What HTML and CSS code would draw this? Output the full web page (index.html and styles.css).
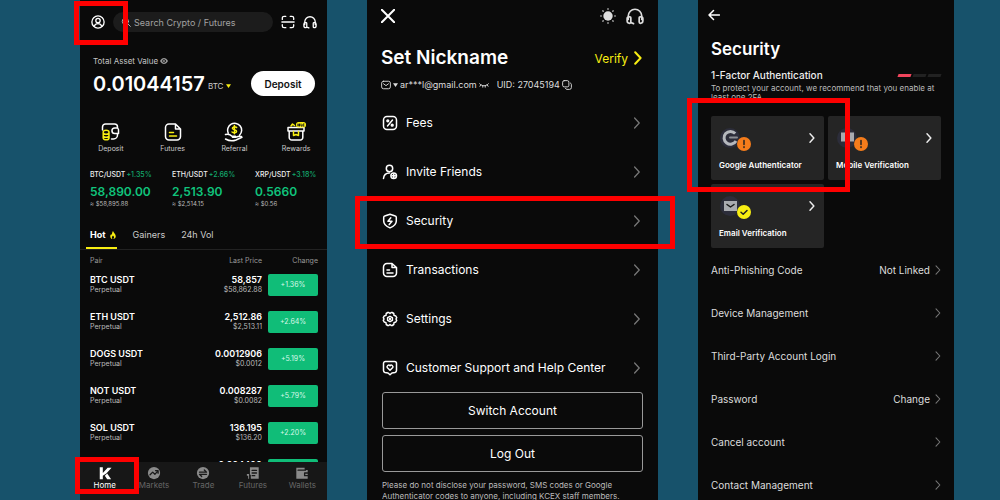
FILE: index.html
```html
<!DOCTYPE html>
<html lang="en">
<head>
<meta charset="utf-8">
<meta name="viewport" content="width=device-width, initial-scale=1">
<title>Security setup guide</title>
<link rel="stylesheet" href="styles.css">
</head>
<body>
<svg class="defs" width="0" height="0" aria-hidden="true">
  <symbol id="chev" viewBox="0 0 8 14"><path d="M1.2 1.2 6.6 7l-5.4 5.8"/></symbol>
  <symbol id="headset" viewBox="0 0 16 16"><path d="M2 11V8a6 6 0 0 1 12 0v3M1 10.5c0-1 .7-1.7 1.6-1.7h.9c.5 0 .8.3.8.8v3.8c0 .6-.5 1.1-1.1 1.1A2.2 2.2 0 0 1 1 12.300zM15 10.500c0-1-.7-1.700-1.600-1.700h-.9c-.5 0-.8.3-.8.8v3.800c0 .6.5 1.100 1.100 1.100a2.200 2.200 0 0 0 2.200-2.200zM4.300 13.800l2.400 1"/></symbol>
  <symbol id="doc" viewBox="0 0 16 16"><path d="M10 1.500H5A3.500 3.500 0 0 0 1.500 5v6A3.500 3.500 0 0 0 5 14.500h6a3.500 3.500 0 0 0 3.500-3.500V5.500zM10 1.500V5.500h4.500"/></symbol>
</svg>

<main class="stage">
  <section class="screen home" aria-label="Home">
    <header class="home-top">
      <button class="icon-btn marked marked-user" aria-label="Profile">
        <svg class="i14" viewBox="0 0 16 16"><circle cx="8" cy="8" r="7"/><circle cx="8" cy="6.300" r="2.500"/><path d="M3.600 12.800c.8-1.900 2.400-3 4.400-3s3.600 1.100 4.400 3"/></svg>
      </button>
      <label class="search">
        <svg class="i10" viewBox="0 0 16 16"><circle cx="7" cy="7" r="5"/><path d="m11 11 4 4"/></svg>
        <input type="text" placeholder="Search Crypto / Futures" aria-label="Search">
      </label>
      <button class="icon-btn" aria-label="Scan">
        <svg class="i14" viewBox="0 0 16 16"><path d="M1.500 5V3.500a2 2 0 0 1 2-2H5.500M10.500 1.500h2a2 2 0 0 1 2 2V5M1.500 11v1.500a2 2 0 0 0 2 2h2M10.500 14.500h2a2 2 0 0 0 2-2V11M1 8h14"/></svg>
      </button>
      <button class="icon-btn" aria-label="Support"><svg class="i14"><use href="#headset"/></svg></button>
    </header>

    <div class="asset">
      <div class="asset-label">Total Asset Value
        <svg class="i8 eye" viewBox="0 0 16 16"><path class="fill" d="M0 8c2-4 5-6 8-6s6 2 8 6c-2 4-5 6-8 6S2 12 0 8z"/><circle class="ring" cx="8" cy="8" r="3"/></svg>
      </div>
      <div class="asset-row">
        <strong class="amount">0.01044157</strong>
        <span class="unit">BTC</span>
        <svg class="caret yellow" viewBox="0 0 8 6"><path d="M0 0h8L4 6z"/></svg>
        <button class="deposit">Deposit</button>
      </div>
    </div>

    <nav class="quick" aria-label="Shortcuts">
      <a href="#">
        <svg class="i20" viewBox="0 0 20 20"><path d="M1.500 8V5a3 3 0 0 1 3-3h9a3 3 0 0 1 3 3v1M16.500 6h-2.800a2.700 2.700 0 0 0 0 5.500h3.800V8.500a2.500 2.500 0 0 0-1-2.500M16.500 11.500V13a4 4 0 0 1-4 4h-2"/><path class="ystroke" d="M2.200 10a2.900 1.800 0 0 1 5.800 0v6a2.900 1.800 0 0 1-5.800 0zM2.200 11c1 1.700 4.800 1.700 5.800 0M2.200 14c1 1.700 4.800 1.700 5.800 0"/></svg>
        Deposit
      </a>
      <a href="#">
        <svg class="i20" viewBox="0 0 20 20"><path d="M12.500 2H6a3.500 3.500 0 0 0-3.500 3.500v9A3.500 3.500 0 0 0 6 18h8a3.500 3.500 0 0 0 3.500-3.500V7zM12.500 2v5h5"/><path class="ystroke" d="M6.500 10.500h4M6.500 14h7"/></svg>
        Futures
      </a>
      <a href="#">
        <svg class="i20" viewBox="0 0 20 20"><path d="M4.200 11A7 7 0 1 1 15.500 13.300M1.500 12.500c3-1 5 .2 6.500 1.700h3.500M1.500 17c3.500 2 7.500 2.200 10.500 1l6-2.800c-.7-1.500-2.500-1.200-6.500 0H8.500"/><path class="ystroke" d="M12.600 5.500c-2-1.300-4.400-.5-4.200 1 .2 1.600 4.200 1 4.200 2.800 0 1.600-2.800 2-4.600.7M10.400 3.500v8.200"/></svg>
        Referral
      </a>
      <a href="#">
        <svg class="i20" viewBox="0 0 20 20"><path d="M2 5.500h16v3.500H2zM3.200 9v6.500A2.500 2.500 0 0 0 5.700 18h8.600a2.500 2.500 0 0 0 2.500-2.500V9"/><path class="ystroke" d="M7.500 9.500v4l2.500-1 2.500 1v-4M5 4l1.500-2L8.500 3.500"/><rect class="yfill" x="10" y="0" width="10" height="5.500" rx="2.500"/><path class="dark" d="M12 2v2M13.500 2v2M12 3h1.500M15 2v2h1M18 2h-1v2h1"/></svg>
        Rewards
      </a>
    </nav>

    <div class="tickers">
      <div><p class="t-name">BTC/USDT<span>+1.35%</span></p><p class="t-price">58,890.00</p><p class="t-sub">≈ $58,895.88</p></div>
      <div><p class="t-name">ETH/USDT<span>+2.66%</span></p><p class="t-price">2,513.90</p><p class="t-sub">≈ $2,514.15</p></div>
      <div><p class="t-name">XRP/USDT<span>+3.18%</span></p><p class="t-price">0.5660</p><p class="t-sub">≈ $0.56</p></div>
    </div>

    <div class="tabs" role="tablist">
      <button class="tab active" role="tab" aria-selected="true">Hot
        <svg class="i8" viewBox="0 0 16 16"><path class="yfill" d="M8 0c1 4 5.500 5.500 5.500 10.500C13.500 14 11 16 8 16s-5.500-2-5.500-5.200c0-2.300 1-3.800 2-4.800.2 1 .5 1.600 1.200 2C6 5 6.500 2 8 0z"/><path class="cut" d="M8 9c1.500 1.500 2.200 2.500 2.200 4S9 16 8 16s-2.200-1-2.200-3S7 10.500 8 9z"/></svg>
      </button>
      <button class="tab" role="tab" aria-selected="false">Gainers</button>
      <button class="tab" role="tab" aria-selected="false">24h Vol</button>
    </div>

    <div class="market">
      <table>
        <thead><tr><th>Pair</th><th class="num">Last Price</th><th class="num chg">Change</th></tr></thead>
        <tbody>
          <tr><td><b>BTC USDT</b><small>Perpetual</small></td><td class="num"><b>58,857</b><small>$58,862.88</small></td><td class="chg"><span class="badge">+1.36%</span></td></tr>
          <tr><td><b>ETH USDT</b><small>Perpetual</small></td><td class="num"><b>2,512.86</b><small>$2,513.11</small></td><td class="chg"><span class="badge">+2.64%</span></td></tr>
          <tr><td><b>DOGS USDT</b><small>Perpetual</small></td><td class="num"><b>0.0012906</b><small>$0.0012</small></td><td class="chg"><span class="badge">+5.19%</span></td></tr>
          <tr><td><b>NOT USDT</b><small>Perpetual</small></td><td class="num"><b>0.008287</b><small>$0.0082</small></td><td class="chg"><span class="badge">+5.79%</span></td></tr>
          <tr><td><b>SOL USDT</b><small>Perpetual</small></td><td class="num"><b>136.195</b><small>$136.20</small></td><td class="chg"><span class="badge">+2.20%</span></td></tr>
          <tr><td></td><td class="num"><b>0.004490</b><small>&nbsp;</small></td><td class="chg"><span class="badge">&nbsp;</span></td></tr>
        </tbody>
      </table>
    </div>

    <nav class="tabbar" aria-label="Main">
      <a href="#" class="on marked marked-home">
        <svg class="i14" viewBox="0 0 16 16"><path class="fill" d="M2 1.500h3.500v6.500L11 2h4.500L9.500 8.500 5.500 11V15H2zM10.500 8.500l4.500 6.500h-4.500L7.800 11z"/></svg>Home</a>
      <a href="#">
        <svg class="i14" viewBox="0 0 16 16"><circle class="fill" cx="8" cy="8" r="7"/><path class="dark" d="m3.500 10 3-3 2.500 2.500 3.500-4M9.800 5.300h2.900v2.900"/></svg>Markets</a>
      <a href="#">
        <svg class="i14" viewBox="0 0 16 16"><circle class="fill" cx="8" cy="8" r="7"/><path class="dark" d="M4 7h8L9.500 4.500M12 9.500H4L6.500 12"/></svg>Trade</a>
      <a href="#">
        <svg class="i14" viewBox="0 0 16 16"><path class="fill" d="M4.500 1.500h10v13h-9V10H4.500zM1 9h2.500v5.500H2.500V11H1z"/><path class="dark" d="M7 5h5M7 8h5M7 11h3"/></svg>Futures</a>
      <a href="#">
        <svg class="i14" viewBox="0 0 16 16"><path class="fill" d="M1.500 2H11v2.500h3.500v10h-13z"/><path class="dark" d="M3.500 4.800H12M15 8h-4v3h4"/></svg>Wallets</a>
    </nav>
  </section>

  <section class="screen profile" aria-label="Profile">
    <header class="profile-top">
      <button class="icon-btn" aria-label="Close"><svg class="i14 close" viewBox="0 0 14 14"><path d="m.8.8 12.400 12.400M13.200.8.8 13.200"/></svg></button>
      <span class="grow"></span>
      <button class="icon-btn" aria-label="Theme"><svg class="i16" viewBox="0 0 16 16"><circle class="sun" cx="8" cy="8" r="4.700"/><path class="rays" d="M8 .8v.4M8 14.800v.4M.8 8h.4M14.800 8h.4M2.900 2.900l.3.3M12.800 12.800l.3.3M2.900 13.100l.3-.3M12.800 3.200l.3-.3"/></svg></button>
      <button class="icon-btn dim" aria-label="Support"><svg class="i18"><use href="#headset"/></svg></button>
    </header>
    <div class="nick">
      <h1>Set Nickname</h1>
      <a href="#" class="verify">Verify <svg class="chev big"><use href="#chev"/></svg></a>
    </div>
    <div class="ids">
      <svg class="i10" viewBox="0 0 16 14"><rect x="1" y="1" width="14" height="12" rx="3"/><path d="m4 5 4 3 4-3"/></svg>
      <svg class="caret" viewBox="0 0 8 6"><path d="M0 0h8L4 6z"/></svg>
      <span>ar***l@gmail.com</span>
      <svg class="i10" viewBox="0 0 16 14"><path d="M1 5c4 4.500 10 4.500 14 0M3 6.500 1.500 9M13 6.500 14.500 9M6 8v2.500M10 8v2.500"/></svg>
      <span class="uid">UID: 27045194</span>
      <svg class="i10" viewBox="0 0 16 16"><rect x="1" y="1" width="10" height="10" rx="2.500"/><path d="M13.500 5c1 .3 1.500 1 1.500 2v5a3 3 0 0 1-3 3H8a3 3 0 0 1-2.500-1.500"/></svg>
    </div>
    <nav class="menu" aria-label="Account">
      <a href="#"><svg class="i16" viewBox="0 0 16 16"><rect x="1.500" y="1.500" width="13" height="13" rx="3.500"/><path d="m10.500 5-5 6"/><circle cx="5.800" cy="5.800" r=".9"/><circle cx="10.200" cy="10.200" r=".9"/></svg><span>Fees</span><svg class="chev"><use href="#chev"/></svg></a>
      <a href="#"><svg class="i16" viewBox="0 0 16 16"><circle cx="7.500" cy="4.500" r="3.200"/><path d="M1.500 14.500c.3-3.500 2.500-5.500 6-5.500"/><circle cx="11.700" cy="11.700" r="2.800"/><path d="M11.700 10v3.400M10 11.700h3.400"/></svg><span>Invite Friends</span><svg class="chev"><use href="#chev"/></svg></a>
      <a href="#" class="marked marked-security"><svg class="i16" viewBox="0 0 16 16"><path d="M8 1.300 13.300 3c.7.2 1 .7 1 1.400V8c0 3-2.300 5.300-6.300 6.900C4 13.300 1.700 11 1.700 8V4.400c0-.7.3-1.200 1-1.400z"/><path d="M8.800 4.800 6 8.300h4l-2.800 3.300"/></svg><span>Security</span><svg class="chev"><use href="#chev"/></svg></a>
      <a href="#"><svg class="i16" viewBox="0 0 16 16"><use href="#doc" width="16" height="16"/><path d="M5 8h2.500M5 11h6"/></svg><span>Transactions</span><svg class="chev"><use href="#chev"/></svg></a>
      <a href="#"><svg class="i16" viewBox="0 0 16 16"><path d="M5.800 1.500h1l1.200 1 1.200-1h1l1.600 1 .2 1.900 1.800.6.900 1.600-.7 1.400.7 1.400-.9 1.600-1.800.6-.2 1.900-1.600 1h-1L8 13.500l-1.200 1h-1l-1.600-1-.2-1.900-1.800-.6-.9-1.600.7-1.400-.7-1.400.9-1.600L4 4.400l.2-1.900z"/><path d="m8 5.300 2.400 1.400v2.600L8 10.700 5.600 9.300V6.700z"/><circle cx="8" cy="8" r=".5"/></svg><span>Settings</span><svg class="chev"><use href="#chev"/></svg></a>
      <a href="#"><svg class="i16" viewBox="0 0 16 16"><path d="M3.500 1.500h9a2 2 0 0 1 2 2v7c0 1-.6 1.700-1.500 2L10 13l-2 1.800L6 13l-3-.5c-.9-.3-1.500-1-1.500-2v-7a2 2 0 0 1 2-2z"/><path d="M8 10.300 5.200 7.500C4.500 6.200 6.500 4 8 5.800c1.500-1.800 3.500.4 2.800 1.700z"/></svg><span>Customer Support and Help Center</span><svg class="chev"><use href="#chev"/></svg></a>
    </nav>
    <div class="actions">
      <button>Switch Account</button>
      <button>Log Out</button>
    </div>
    <p class="notice">Please do not disclose your password, SMS codes or Google Authenticator codes to anyone, including KCEX staff members.</p>
  </section>

  <section class="screen security" aria-label="Security">
    <button class="icon-btn back" aria-label="Back"><svg class="i12" viewBox="0 0 12 12"><path d="M11.500 6H1M5.500 1.500 1 6l4.500 4.500"/></svg></button>
    <h2>Security</h2>
    <div class="factor">
      <h3>1-Factor Authentication</h3>
      <span class="level"><i class="hit"></i><i></i><i></i></span>
    </div>
    <p class="hint">To protect your account, we recommend that you enable at least one 2FA.</p>
    <div class="cards">
      <a href="#" class="card marked marked-google">
        <span class="card-top">
          <span class="method"><svg class="i20" viewBox="0 0 20 20"><circle class="halo" cx="10" cy="10" r="10"/><path class="gring" d="M15.200 5.500A6.400 6.400 0 1 0 16 13"/><path class="gbar" d="M10 9.500h7"/></svg>
          <svg class="state" viewBox="0 0 14 14"><circle class="warn" cx="7" cy="7" r="7"/><path class="sign" d="M7 3.500v4M7 9.800v.7"/></svg></span>
          <svg class="chev light"><use href="#chev"/></svg>
        </span>
        Google Authenticator
      </a>
      <a href="#" class="card">
        <span class="card-top">
          <span class="method"><svg class="i20" viewBox="0 0 20 20"><circle class="halo" cx="10" cy="10" r="10"/><path class="gray" d="M4 4.500h13v9h-4.500L10.500 16l-2-2.500H4z"/></svg>
          <svg class="state" viewBox="0 0 14 14"><circle class="warn" cx="7" cy="7" r="7"/><path class="sign" d="M7 3.500v4M7 9.800v.7"/></svg></span>
          <svg class="chev light"><use href="#chev"/></svg>
        </span>
        Mobile Verification
      </a>
      <a href="#" class="card">
        <span class="card-top">
          <span class="method"><svg class="i20" viewBox="0 0 20 20"><circle class="halo" cx="10" cy="10" r="10"/><path class="gray" d="M4 5h13v10H4z"/><path class="dark" d="m7 8.500 3.500 2.500L14 8.500"/></svg>
          <svg class="state" viewBox="0 0 14 14"><circle class="yfill" cx="7" cy="7" r="7"/><path class="sign" d="m4 7.200 2.200 2.100L10 5.500"/></svg></span>
          <svg class="chev light"><use href="#chev"/></svg>
        </span>
        Email Verification
      </a>
    </div>
    <nav class="options" aria-label="Security options">
      <a href="#"><span>Anti-Phishing Code</span><em>Not Linked</em><svg class="chev small"><use href="#chev"/></svg></a>
      <a href="#"><span>Device Management</span><svg class="chev small"><use href="#chev"/></svg></a>
      <a href="#"><span>Third-Party Account Login</span><svg class="chev small"><use href="#chev"/></svg></a>
      <a href="#"><span>Password</span><em>Change</em><svg class="chev small"><use href="#chev"/></svg></a>
      <a href="#"><span>Cancel account</span><svg class="chev small"><use href="#chev"/></svg></a>
      <a href="#"><span>Contact Management</span><svg class="chev small"><use href="#chev"/></svg></a>
    </nav>
  </section>
</main>
</body>
</html>
```
FILE: styles.css
```css
* { box-sizing: border-box; margin: 0; padding: 0; }

body {
  background: #17526b;
  color: #fff;
  font-family: Inter, "Liberation Sans", sans-serif;
}

a { color: inherit; text-decoration: none; }
button, input { font: inherit; color: inherit; background: none; border: 0; outline: 0; }
button { cursor: pointer; }

svg { display: block; flex: none; fill: none; stroke: currentColor; stroke-width: 1.5; stroke-linecap: round; stroke-linejoin: round; }
.defs { position: absolute; }
.i8 { width: 8px; height: 8px; }
.i10 { width: 10px; height: 10px; }
.i12 { width: 12px; height: 12px; }
.i14 { width: 14px; height: 14px; }
.i16 { width: 16px; height: 16px; }
.i18 { width: 18px; height: 18px; }
.i20 { width: 20px; height: 20px; }
.fill { fill: currentColor; stroke: none; }
.cut { fill: #0a0a0a; stroke: none; }
.dark { stroke: #1a1a1a; }
.yfill { fill: #f8ee12; stroke: none; }
.ystroke { stroke: #f8ee12; }

.stage {
  display: grid;
  grid-template-columns: 247fr 291fr 256fr;
  gap: 40px;
  height: 100vh;
  padding: 0 46px 0 80px;
  overflow: hidden;
}

.screen { display: flex; flex-direction: column; min-width: 0; min-height: 0; background: #0a0a0a; }
.icon-btn { display: flex; flex: none; }
.grow { flex: 1; }

/* red callout frames */
.marked { position: relative; }
.marked::after { content: ""; position: absolute; z-index: 2; border: 5px solid #fe0000; }
.marked-user::after { inset: -14px -23px -16px -17px; }
.marked-home::after { inset: -5px -10px 6px -5px; }
.marked-security::after { inset: 0 -31px -4px -26px; }
.marked-google::after { inset: -18px -26px -12px -24px; }

/* home */
.home-top { display: flex; align-items: center; gap: 8px; padding: 12px 10px 0 11px; }
.search { display: flex; flex: 1; align-items: center; gap: 3px; min-width: 0; height: 20px; padding: 0 8px; border-radius: 10px; background: #1c1c1c; }
.search svg { color: #bbb; }
.search input { flex: 1; min-width: 0; font-size: 9px; }
.search input::placeholder { color: #a2a2a2; opacity: 1; }

.asset { padding: 24px 12px 0 13px; }
.asset-label { display: flex; align-items: center; gap: 2px; font-size: 8px; line-height: 10px; color: #c4c4c4; }
.eye { color: #999; }
.ring { stroke: #0a0a0a; }
.asset-row { display: flex; align-items: center; gap: 3px; margin-top: 5px; }
.amount { font-size: 20px; line-height: 24px; font-weight: 600; }
.unit { font-size: 8px; padding-top: 4px; color: #ccc; }
.caret { width: 5px; height: 4px; fill: currentColor; stroke: none; }
.asset-row .caret { margin-top: 4px; }
.yellow { color: #f8ee12; }
.deposit { margin-left: auto; width: 64px; height: 25px; border-radius: 13px; background: #fff; color: #111; font-size: 10px; font-weight: 600; }

.quick { display: grid; grid-template-columns: repeat(4, 1fr); margin-top: 26px; }
.quick a { display: flex; flex-direction: column; align-items: center; gap: 2px; font-size: 7px; line-height: 10px; color: #ccc; }
.quick svg { color: #fff; }
.quick .dark { stroke-width: 1; }

.tickers { display: grid; grid-template-columns: 82fr 83fr 72fr; margin-top: 16px; padding-left: 10px; white-space: nowrap; }
.t-name { font-size: 7px; line-height: 10px; font-weight: 500; color: #eee; }
.t-name span { margin-left: 1px; color: #12a86c; }
.t-price { margin-top: 4px; font-size: 12px; line-height: 16px; font-weight: 600; color: #10c47c; }
.t-sub { font-size: 6px; line-height: 8px; color: #bbb; }

.tabs { display: flex; gap: 16px; margin-top: 19px; padding: 0 6px; border-bottom: 1px solid #222; }
.tab { display: flex; align-items: center; gap: 3px; padding: 3px 0 7px; font-size: 9px; line-height: 10px; font-weight: 400; color: #ccc; border-bottom: 2px solid transparent; }
.tab.active { padding-left: 4px; font-weight: 700; color: #fff; border-bottom-color: #f8ee12; }

.market { flex: 1; min-height: 0; overflow: hidden; padding: 0 9px 0 10px; }
table { width: 100%; border-collapse: collapse; }
th { height: 16px; padding-top: 5px; font-size: 7px; line-height: 10px; font-weight: 400; text-align: left; color: #999; }
td { height: 37px; vertical-align: middle; }
th.num, td.num { text-align: right; }
td b { display: block; font-size: 9px; line-height: 11px; font-weight: 600; }
td small { display: block; font-size: 7px; line-height: 10px; color: #bbb; }
.chg { width: 56px; padding-left: 6px; }
.badge { display: block; height: 22px; border-radius: 2px; background: #10bd78; color: #d8f8e9; font-size: 7px; line-height: 22px; text-align: center; }

.tabbar { display: grid; grid-template-columns: repeat(5, 1fr); background: #171717; }
.tabbar a { display: flex; flex-direction: column; align-items: center; gap: 0; height: 38px; padding-top: 4px; font-size: 8px; line-height: 10px; color: #666; }
.tabbar svg { color: #8a8a8a; }
.tabbar .on, .tabbar .on svg { color: #fff; }

/* profile */
.profile { padding: 0 14px; }
.profile-top { display: flex; align-items: center; gap: 10px; padding-top: 7px; }
.profile-top .dim { color: #ddd; }
.close { stroke-width: 2; }
.sun { fill: #ddd; stroke: none; }
.rays { stroke: #aaa; }
.nick { display: flex; align-items: center; justify-content: space-between; margin-top: 21px; padding-right: 2px; }
h1 { font-size: 19px; line-height: 24px; font-weight: 600; }
.verify { display: flex; align-items: center; gap: 6px; font-size: 12px; color: #f8ee12; }
.chev { width: 8px; height: 12px; color: #777; }
.chev.big { width: 8px; height: 14px; color: #f8ee12; stroke-width: 2; }
.chev.light { color: #eee; stroke-width: 2; width: 8px; height: 10px; }
.chev.small { width: 6px; height: 10px; }
.ids { display: flex; align-items: center; gap: 2px; margin-top: 9px; font-size: 9px; line-height: 12px; color: #ddd; }
.uid { margin-left: 6px; }

.menu { display: flex; flex-direction: column; margin-top: 7px; }
.menu a { display: flex; align-items: center; gap: 8px; height: 49px; padding: 0 3px 0 1px; font-size: 12px; color: #fff; }
.menu span { flex: 1; }

.actions { display: grid; gap: 6px; padding: 0 1px; }
.actions button { height: 37px; border: 1px solid #999; border-radius: 3px; font-size: 12px; color: #fff; }
.notice { margin-top: 8px; padding-left: 1px; font-size: 8px; line-height: 11px; color: #bbb; }

/* security */
.security { padding: 0 13px; }
.back { align-self: flex-start; margin: 9px 0 0 -3px; }
h2 { margin-top: 18px; font-size: 17px; line-height: 20px; font-weight: 600; }
.factor { display: flex; align-items: center; justify-content: space-between; margin-top: 10px; }
h3 { font-size: 10px; line-height: 12px; font-weight: 500; color: #eee; }
.level { display: flex; gap: 2px; }
.level i { width: 13px; height: 3px; background: #222; transform: skewX(-20deg); }
.level .hit { background: #f0455c; }
.hint { margin-top: 3px; font-size: 8px; line-height: 9px; color: #bbb; }
.cards { display: grid; grid-template-columns: 1fr 1fr; gap: 4px; margin-top: 14px; }
.card { height: 64px; padding: 12px 8px 0; border-radius: 2px; background: #252525; font-size: 8px; line-height: 10px; font-weight: 600; }
.card-top { display: flex; align-items: center; justify-content: space-between; margin-bottom: 12px; padding-left: 1px; }
.method { display: flex; align-items: flex-end; }
.state { width: 14px; height: 14px; margin: 0 0 -3px -3px; }
.halo { fill: #2c2d3a; stroke: none; }
.gring { stroke: #b5b8bd; stroke-width: 3; stroke-linecap: butt; }
.gbar { stroke: #8b8e93; stroke-width: 2; }
.gray { fill: #a9abb0; stroke: none; }
.warn { fill: #f57c1b; stroke: none; }
.sign { stroke: #222; }

.options { display: flex; flex-direction: column; }
.options a { display: flex; align-items: center; gap: 5px; height: 43px; font-size: 10px; color: #ddd; }
.options span { flex: 1; }
.options em { font-style: normal; }
```
